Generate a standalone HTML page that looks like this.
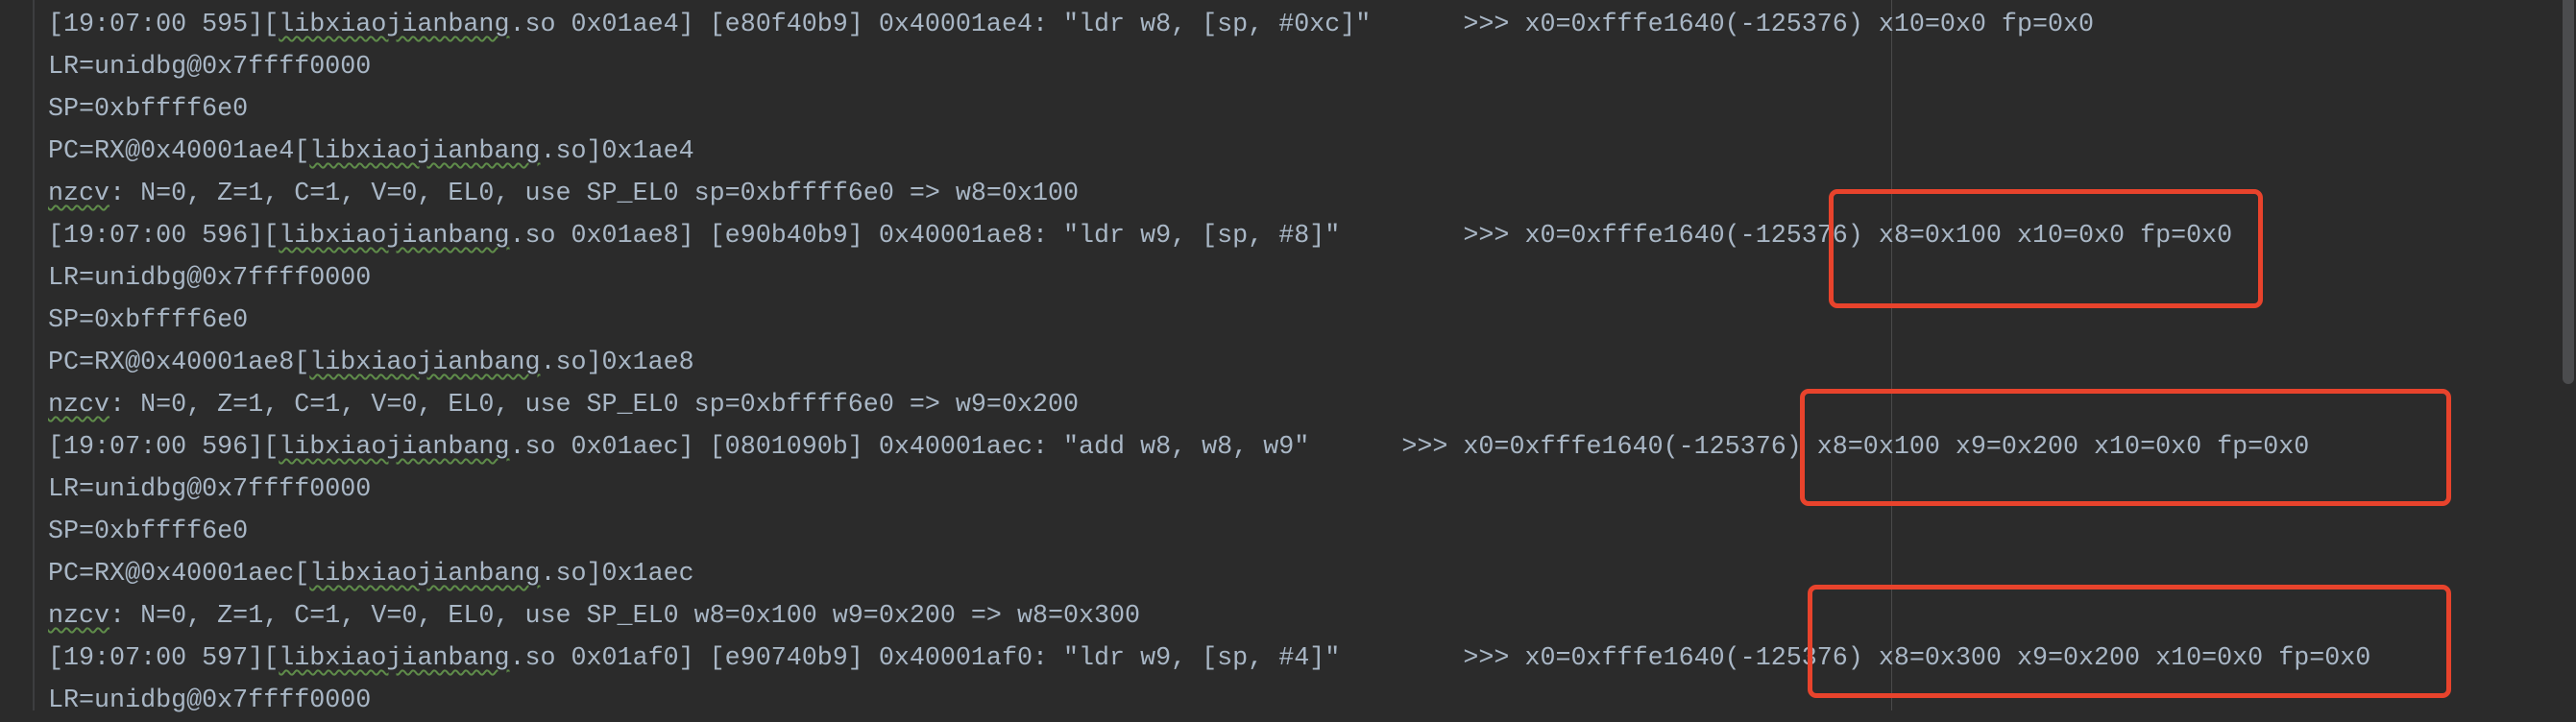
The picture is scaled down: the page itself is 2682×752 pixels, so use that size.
<!DOCTYPE html>
<html><head><meta charset="utf-8"><style>
html,body{margin:0;padding:0;}
body{width:2682px;height:740px;background:#2b2b2b;overflow:hidden;position:relative;}
.gut{position:absolute;left:34px;top:0;width:2px;height:740px;background:#3d3e40;}
.guide{position:absolute;left:1969px;top:0;width:1px;height:740px;background:#4a4a4a;}
.sb{position:absolute;left:2668px;top:0;width:12px;height:400px;background:#4b4c4e;border-radius:0 0 6px 6px;}
.code{position:absolute;left:50px;top:4px;font-family:"Liberation Mono",monospace;font-size:26.7px;line-height:44px;color:#a9b7c6;white-space:pre;}
.w{text-decoration:underline wavy #5f8c4a;text-decoration-thickness:1.5px;text-underline-offset:5px;}
.box{position:absolute;border:5px solid #e8432c;border-radius:9px;box-sizing:border-box;}
</style></head><body>
<div class="gut"></div>
<div class="guide"></div>
<div class="sb"></div>
<div class="code">[19:07:00 595][<span class="w">libxiaojianbang</span>.so 0x01ae4] [e80f40b9] 0x40001ae4: "ldr w8, [sp, #0xc]"      &gt;&gt;&gt; x0=0xfffe1640(-125376) x10=0x0 fp=0x0
LR=unidbg@0x7ffff0000
SP=0xbffff6e0
PC=RX@0x40001ae4[<span class="w">libxiaojianbang</span>.so]0x1ae4
<span class="w">nzcv</span>: N=0, Z=1, C=1, V=0, EL0, use SP_EL0 sp=0xbffff6e0 =&gt; w8=0x100
[19:07:00 596][<span class="w">libxiaojianbang</span>.so 0x01ae8] [e90b40b9] 0x40001ae8: "ldr w9, [sp, #8]"        &gt;&gt;&gt; x0=0xfffe1640(-125376) x8=0x100 x10=0x0 fp=0x0
LR=unidbg@0x7ffff0000
SP=0xbffff6e0
PC=RX@0x40001ae8[<span class="w">libxiaojianbang</span>.so]0x1ae8
<span class="w">nzcv</span>: N=0, Z=1, C=1, V=0, EL0, use SP_EL0 sp=0xbffff6e0 =&gt; w9=0x200
[19:07:00 596][<span class="w">libxiaojianbang</span>.so 0x01aec] [0801090b] 0x40001aec: "add w8, w8, w9"      &gt;&gt;&gt; x0=0xfffe1640(-125376) x8=0x100 x9=0x200 x10=0x0 fp=0x0
LR=unidbg@0x7ffff0000
SP=0xbffff6e0
PC=RX@0x40001aec[<span class="w">libxiaojianbang</span>.so]0x1aec
<span class="w">nzcv</span>: N=0, Z=1, C=1, V=0, EL0, use SP_EL0 w8=0x100 w9=0x200 =&gt; w8=0x300
[19:07:00 597][<span class="w">libxiaojianbang</span>.so 0x01af0] [e90740b9] 0x40001af0: "ldr w9, [sp, #4]"        &gt;&gt;&gt; x0=0xfffe1640(-125376) x8=0x300 x9=0x200 x10=0x0 fp=0x0
LR=unidbg@0x7ffff0000</div>
<div class="box" style="left:1904px;top:197px;width:452px;height:124px;"></div>
<div class="box" style="left:1874px;top:405px;width:678px;height:122px;"></div>
<div class="box" style="left:1882px;top:609px;width:670px;height:118px;"></div>
</body></html>
